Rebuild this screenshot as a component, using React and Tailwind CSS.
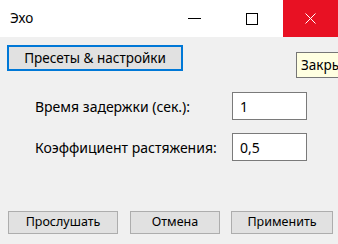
import React from 'react';

const FONT = { fontFamily: '"Noto Sans", "Open Sans", "Liberation Sans", sans-serif' };

function Field({ label, value, top }) {
  return (
    <div className={`flex items-center ${top}`}>
      <span className="w-[225px] shrink-0 pl-[28px] text-[14px] text-black">{label}</span>
      <div className="w-[75px] h-[28px] shrink-0 border border-[#7a7a7a] bg-white flex items-center pl-[7px] text-[14px] text-black">
        {value}
      </div>
    </div>
  );
}

function Btn({ w, children }) {
  return (
    <button className={`${w} h-[23px] border border-[#adadad] bg-[#e1e1e1] text-[12.5px] text-black flex items-center justify-center`}>
      {children}
    </button>
  );
}

export default function App() {
  return (
    <div className="relative w-[338px] h-[244px] bg-[#f0f0f0] overflow-hidden flex flex-col" style={FONT}>
      {/* title bar */}
      <div className="flex h-[37px] bg-white items-stretch shrink-0">
        <span className="flex-1 pl-[10px] flex items-center text-[13.5px] text-black">Эхо</span>
        <div className="w-[46px] flex items-center justify-center">
          <div className="w-[13px] h-px bg-black" />
        </div>
        <div className="w-[46px] ml-[12px] flex items-center justify-center">
          <div className="w-[12px] h-[12px] border border-black" />
        </div>
        <div className="w-[55px] ml-[8px] bg-[#e81123] flex items-center justify-center">
          <svg width="11" height="11" viewBox="0 0 11 11">
            <path d="M0.5 0.5L10.5 10.5M10.5 0.5L0.5 10.5" stroke="#fff" strokeWidth="1" />
          </svg>
        </div>
      </div>

      {/* body */}
      <div className="flex-1 flex flex-col pl-[7px] pt-[8px] pb-[10px]">
        <button className="w-[176px] h-[26px] border-2 border-[#0078d7] bg-[#e1e1e1] text-[13.5px] text-black flex items-center justify-center">
          Пресеты &amp; настройки
        </button>
        <Field label="Время задержки (сек.):" value="1" top="mt-[21px]" />
        <Field label="Коэффициент растяжения:" value="0,5" top="mt-[13px]" />
        <div className="mt-auto flex pl-px">
          <Btn w="w-[110px]">Прослушать</Btn>
          <div className="ml-[12px]"><Btn w="w-[90px]">Отмена</Btn></div>
          <div className="ml-[11px]"><Btn w="w-[102px]">Применить</Btn></div>
        </div>
      </div>

      {/* tooltip */}
      <div className="absolute left-[296px] top-[52px] h-[26px] border border-[#767676] bg-[#ffffe1] pl-[4px] pr-[6px] flex items-center text-[13.5px] text-black whitespace-nowrap">
        Закрыть
      </div>
    </div>
  );
}
